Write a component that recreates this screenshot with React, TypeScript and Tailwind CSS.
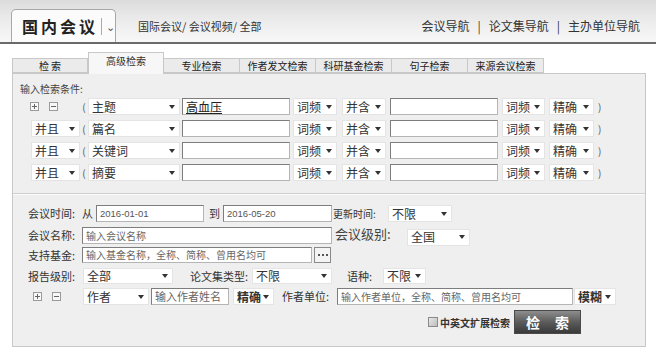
import React from "react";

const font = { fontFamily: "'Noto Sans CJK SC', 'Liberation Sans', sans-serif" };

function Caret() {
  return (
    <svg width="6" height="4" viewBox="0 0 6 4" className="shrink-0">
      <path d="M0 0 L6 0 L3 4 Z" fill="#333" />
    </svg>
  );
}

function Sel({ w, text, className = "" }: { w: string; text: string; className?: string }) {
  return (
    <div
      className={`${w} h-full shrink-0 flex items-center justify-between bg-white border border-[#e4e4e4] pl-[3px] pr-[4px] text-[12px] text-[#333] ${className}`}
    >
      <span className="leading-none">{text}</span>
      <Caret />
    </div>
  );
}

function Inp({ w, value, placeholder, className = "" }: { w: string; value?: string; placeholder?: string; className?: string }) {
  return (
    <div
      className={`${w} h-full shrink-0 flex items-center bg-white border border-[#7d7d7d] border-b-[#b5b5b5] border-r-[#b5b5b5] px-[3px] overflow-hidden ${className}`}
    >
      {value ? (
        <span className="text-[12px] leading-none text-[#222]">{value}</span>
      ) : (
        <span className="text-[10px] leading-none text-[#666]">{placeholder}</span>
      )}
    </div>
  );
}

function PlusMinus({ kind }: { kind: "plus" | "minus" }) {
  return (
    <div className="w-[9px] h-[9px] border border-[#9a9a9a] bg-[#f8f8f8] relative shrink-0">
      <div className="absolute left-[1px] right-[1px] top-[3px] h-[1px] bg-[#666]" />
      {kind === "plus" && <div className="absolute top-[1px] bottom-[1px] left-[3px] w-[1px] bg-[#666]" />}
    </div>
  );
}

const tabs = ["检 索", "高级检索", "专业检索", "作者发文检索", "科研基金检索", "句子检索", "来源会议检索"];
const fields = ["主题", "篇名", "关键词", "摘要"];

export default function App() {
  return (
    <div className="w-[656px] h-[355px] bg-white overflow-hidden text-[#333] whitespace-nowrap" style={font}>
      {/* 顶部栏 */}
      <div className="h-[42px] bg-gradient-to-b from-[#dcdcdc] via-[#ececec] to-[#f8f8f8] flex items-end">
        <div className="ml-[11px] w-[105px] h-[33px] bg-[#fbfbfb] border border-b-0 border-[#a8a8a8] rounded-t-[5px] flex items-center">
          <span className="ml-[10px] w-[79px] text-[16px] font-bold tracking-[3px] text-[#222] leading-none">国内会议</span>
          <div className="w-[1px] h-[17px] bg-[#aaa]" />
          <span className="ml-[4px] text-[11px] text-[#555] leading-none">⌄</span>
        </div>
        <div className="self-center mt-[10px] ml-[22px] text-[11px] text-[#333]">国际会议/ 会议视频/ 全部</div>
        <div className="self-center mt-[10px] ml-auto mr-[16px] text-[12px] text-[#333] flex gap-[8px]">
          <span>会议导航</span>
          <span>|</span>
          <span>论文集导航</span>
          <span>|</span>
          <span>主办单位导航</span>
        </div>
      </div>
      <div className="h-[2px] bg-[#6a6a6a]" />

      {/* 标签页 */}
      <div className="mt-[7px] ml-[12px] flex items-end h-[22px]">
        {tabs.map((t, i) =>
          i === 1 ? (
            <div
              key={t}
              className="w-[76px] h-[22px] bg-[#f7f7f7] border border-b-0 border-[#c8c8c8] text-[10px] text-[#333] text-center pt-[3px] leading-none relative z-10 -mb-[1px]"
            >
              {t}
            </div>
          ) : (
            <div
              key={t}
              className="w-[76px] h-[15px] bg-[#ebebeb] border border-[#c8c8c8] border-l-0 first:border-l text-[10px] text-[#222] flex items-center justify-center leading-none"
            >
              {t}
            </div>
          )
        )}
      </div>

      {/* 主面板 */}
      <div className="ml-[12px] w-[634px] h-[274px] bg-[#efefef] border border-[#c8c8c8] flex flex-col">
        <div className="mt-[8px] ml-[7px] h-[14px] leading-[14px] text-[10px] text-[#444]">输入检索条件:</div>

        <div className="mt-[2px] flex flex-col gap-[5px]">
          {fields.map((f, i) => (
            <div key={f} className="h-[17px] flex items-center">
              <div className="ml-[18px] w-[49px] h-full shrink-0 flex items-center">
                {i === 0 ? (
                  <div className="flex items-center gap-[10px] ml-[-1px]">
                    <PlusMinus kind="plus" />
                    <PlusMinus kind="minus" />
                  </div>
                ) : (
                  <Sel w="w-[49px]" text="并且" />
                )}
              </div>
              <span className="w-[8px] text-[10px] text-[#555] text-center shrink-0">(</span>
              <Sel w="w-[92px]" text={f} />
              <Inp w="w-[108px]" value={i === 0 ? "高血压" : undefined} className="ml-[2px] [&>span]:underline" />
              <Sel w="w-[44px]" text="词频" className="ml-[3px] text-[11px]" />
              <Sel w="w-[44px]" text="并含" className="ml-[5px] text-[11px]" />
              <Inp w="w-[108px]" className="ml-[4px]" />
              <Sel w="w-[43px]" text="词频" className="ml-[4px] text-[11px]" />
              <Sel w="w-[45px]" text="精确" className="ml-[4px] text-[11px]" />
              <span className="ml-[4px] text-[10px] text-[#555]">)</span>
            </div>
          ))}
        </div>

        <div className="mt-[12px] h-[1px] bg-[#cfcfcf]" />
        <div className="h-[1px] bg-[#fafafa]" />

        <div className="mt-[10px] flex flex-col text-[11px] text-[#333]">
          {/* 会议时间 */}
          <div className="h-[17px] flex items-center">
            <span className="ml-[15px] w-[54px] shrink-0">会议时间:</span>
            <span className="w-[14px] shrink-0">从</span>
            <Inp
              w="w-[108px]"
              placeholder="2016-01-01"
              className="[&>span]:text-[9.5px] [&>span]:text-[#555] [&>span]:font-['Liberation_Sans']"
            />
            <span className="w-[19px] shrink-0 pl-[5px]">到</span>
            <Inp
              w="w-[109px]"
              placeholder="2016-05-20"
              className="[&>span]:text-[9.5px] [&>span]:text-[#555] [&>span]:font-['Liberation_Sans']"
            />
            <span className="w-[56px] shrink-0 text-[10px] pl-[1px]">更新时间:</span>
            <Sel w="w-[64px]" text="不限" className="text-[11px]" />
          </div>
          {/* 会议名称 */}
          <div className="mt-[5px] h-[17px] flex items-center">
            <span className="ml-[15px] w-[54px] shrink-0">会议名称:</span>
            <Inp w="w-[250px]" placeholder="输入会议名称" />
            <span className="ml-[3px] w-[72px] shrink-0 text-[13px] leading-none -mt-[4px] text-[#444]">会议级别:</span>
            <Sel w="w-[63px]" text="全国" className="mt-[3px] h-[15px] text-[11px]" />
          </div>
          {/* 支持基金 */}
          <div className="mt-[3px] h-[16px] flex items-center">
            <span className="ml-[15px] w-[54px] shrink-0">支持基金:</span>
            <Inp w="w-[230px]" placeholder="输入基金名称，全称、简称、曾用名均可" />
            <div className="ml-[2px] w-[17px] h-full border border-[#8a8a8a] bg-[#f4f4f4] flex items-center justify-center gap-[2px]">
              <div className="w-[2px] h-[2px] bg-[#555]" />
              <div className="w-[2px] h-[2px] bg-[#555]" />
              <div className="w-[2px] h-[2px] bg-[#555]" />
            </div>
          </div>
          {/* 报告级别 */}
          <div className="mt-[5px] h-[16px] flex items-center">
            <span className="ml-[15px] w-[55px] shrink-0">报告级别:</span>
            <Sel w="w-[90px]" text="全部" className="text-[11px]" />
            <span className="ml-[17px] w-[62px] shrink-0">论文集类型:</span>
            <Sel w="w-[80px]" text="不限" className="text-[11px]" />
            <span className="ml-[15px] w-[36px] shrink-0">语种:</span>
            <Sel w="w-[43px]" text="不限" className="text-[11px]" />
          </div>
          {/* 作者 */}
          <div className="mt-[4px] h-[17px] flex items-center">
            <div className="ml-[20px] w-[50px] shrink-0 flex items-center gap-[10px]">
              <PlusMinus kind="plus" />
              <PlusMinus kind="minus" />
            </div>
            <Sel w="w-[66px]" text="作者" className="text-[11px]" />
            <Inp w="w-[78px]" placeholder="输入作者姓名" className="ml-[2px] [&>span]:text-[11px]" />
            <Sel w="w-[41px]" text="精确" className="ml-[4px] text-[10.5px] font-bold" />
            <span className="ml-[8px] w-[55px] shrink-0">作者单位:</span>
            <Inp w="w-[236px]" placeholder="输入作者单位，全称、简称、曾用名均可" />
            <Sel w="w-[42px]" text="模糊" className="ml-[1px] text-[10.5px] font-bold" />
          </div>
          {/* 检索按钮 */}
          <div className="mt-[5px] h-[24px] flex items-center">
            <div className="ml-[415px] w-[10px] h-[10px] border border-[#8a8a8a] bg-gradient-to-br from-[#e8e8e8] to-[#bdbdbd] shrink-0" />
            <span className="ml-[2px] text-[10px] font-bold text-[#333]">中英文扩展检索</span>
            <button className="ml-[4px] w-[67px] h-[24px] border border-[#4a4a4a] bg-gradient-to-b from-[#8e8e8e] via-[#5c5c5c] to-[#3a3a3a] text-white text-[14px] font-bold tracking-[6px] pl-[6px] leading-none">
              检 索
            </button>
          </div>
        </div>
      </div>
    </div>
  );
}
